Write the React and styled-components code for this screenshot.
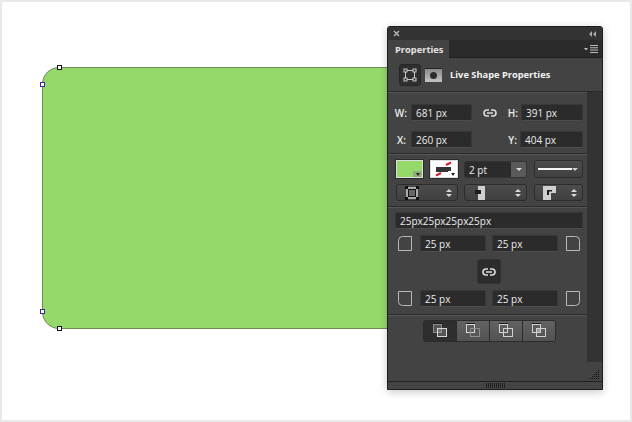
import React from 'react';
import styled, { createGlobalStyle } from 'styled-components';

const Global = createGlobalStyle`
  html, body { margin: 0; padding: 0; background: #fff; }
  * { box-sizing: border-box; }
`;

const Canvas = styled.div`
  position: relative;
  width: 632px;
  height: 422px;
  overflow: hidden;
  background: #fff;
  border: 2px solid #e9e9e9;
  font-family: "Open Sans", "DejaVu Sans", sans-serif;
`;

const Shape = styled.div`
  position: absolute;
  left: 40px;
  top: 65px;
  width: 400px;
  height: 262px;
  background: #95d96b;
  border: 1px solid #6c8a58;
  border-radius: 17px 0 0 17px;
`;

const Handle = styled.span`
  position: absolute;
  left: ${p => p.$x}px;
  top: ${p => p.$y}px;
  width: 5px;
  height: 5px;
  background: #fff;
  border: 1px solid ${p => p.$purple ? '#42249a' : '#14141f'};
`;

const Panel = styled.div`
  position: absolute;
  left: 385px;
  top: 24px;
  width: 216px;
  height: 364px;
  display: flex;
  flex-direction: column;
  background: #434343;
  border: 1px solid #1f1f1f;
  border-radius: 3px 3px 0 0;
  box-shadow: 0 2px 8px rgba(0, 0, 0, 0.22);
  color: #e8e8e8;
  font-size: 10px;
`;

const TitleBar = styled.div`
  height: 13px;
  display: flex;
  align-items: center;
  justify-content: space-between;
  padding: 0 5px 0 5px;
  background: #333;
`;

const TabRow = styled.div`
  height: 18px;
  display: flex;
  align-items: stretch;
  justify-content: space-between;
  background: #2b2b2b;
  border-bottom: 1px solid #1f1f1f;
`;

const Tab = styled.div`
  width: 61px;
  height: 18px;
  display: flex;
  align-items: center;
  padding-left: 7px;
  background: #434343;
  font-weight: 700;
  font-size: 9.3px;
  color: #e4e4e4;
`;

const MenuButton = styled.div`
  display: flex;
  align-items: center;
  padding-right: 4px;
`;

const LiveRow = styled.div`
  height: 34px;
  display: flex;
  align-items: center;
  padding-left: 11px;
  border-bottom: 1px solid #2b2b2b;
  box-shadow: 0 1px 0 #555;
`;

const ModeButton = styled.div`
  width: 22px;
  height: 22px;
  display: flex;
  align-items: center;
  justify-content: center;
  background: #2f2f2f;
  border: 1px solid #262626;
  border-radius: 3px;
`;

const MaskThumb = styled.div`
  width: 17px;
  height: 14px;
  margin-left: 4px;
  display: flex;
  align-items: center;
  justify-content: center;
  background: linear-gradient(#8a8a8a, #c4c4c4);
  border-top: 1px solid #222;
  &::after {
    content: '';
    width: 7px;
    height: 7px;
    border-radius: 50%;
    background: #2c2c2c;
  }
`;

const LiveTitle = styled.div`
  margin-left: 8px;
  font-weight: 700;
  font-size: 9.3px;
  color: #f2f2f2;
`;

const Body = styled.div`
  flex: none;
  height: 270px;
  display: flex;
`;

const Content = styled.div`
  width: 199px;
  display: flex;
  flex-direction: column;
`;

const Scroll = styled.div`
  width: 15px;
  background: #333;
`;

const Section = styled.div`
  padding: ${p => p.$padding};
  border-bottom: 1px solid #2b2b2b;
  box-shadow: 0 1px 0 #555;
`;

const MetricGrid = styled.div`
  display: grid;
  grid-template-columns: 23px 61px 35px 14px 62px;
  grid-auto-rows: 17px;
  row-gap: 10px;
  align-items: center;
`;

const MetricLabel = styled.label`
  text-align: right;
  padding-right: ${p => p.$pad || 5}px;
  font-weight: 600;
  font-size: 10px;
  color: #ececec;
  white-space: nowrap;
`;

const Field = styled.div`
  height: 17px;
  display: flex;
  align-items: center;
  padding-left: 4px;
  margin-left: ${p => p.$shift || 0}px;
  background: #2b2b2b;
  border: 1px solid #383838;
  border-bottom-color: #4d4d4d;
  font-size: 10px;
  color: #ededed;
  white-space: nowrap;
`;

const LinkCell = styled.div`
  display: flex;
  justify-content: center;
`;

const StrokeGrid = styled.div`
  display: grid;
  grid-template-columns: 62px 63px 50px;
  column-gap: 6px;
  row-gap: 6px;
  margin-left: 8px;
`;

const SwatchPair = styled.div`
  display: flex;
  gap: 7px;
`;

const Swatch = styled.div`
  position: relative;
  width: 28px;
  height: 18px;
  background: ${p => p.$color};
  border: 1px solid #ddd;
  box-shadow: 0 0 0 1px #2c2c2c;
  &::after {
    content: '';
    position: absolute;
    right: 0;
    bottom: 0;
    width: 9px;
    height: 6px;
    background: ${p => p.$tab};
  }
  &::before {
    content: '';
    position: absolute;
    z-index: 1;
    right: 2px;
    bottom: 1px;
    border: 2.5px solid transparent;
    border-top: 3px solid #222;
    border-bottom-width: 0;
  }
`;

const StrokeIcon = styled.svg`
  display: block;
`;

const WidthSelect = styled.div`
  height: 17px;
  margin-top: 1px;
  display: flex;
  border: 1px solid #333;
  border-radius: 2px;
  overflow: hidden;
`;

const WidthValue = styled.div`
  flex: 1;
  display: flex;
  align-items: center;
  padding-left: 4px;
  background: #2b2b2b;
  font-size: 10px;
  color: #ededed;
`;

const WidthArrow = styled.div`
  width: 15px;
  display: flex;
  align-items: center;
  justify-content: center;
  background: #5a5a5a;
  &::after {
    content: '';
    border: 3px solid transparent;
    border-top: 3px solid #ddd;
    border-bottom-width: 0;
  }
`;

const Dropdown = styled.div`
  height: ${p => p.$height || 17}px;
  margin-left: ${p => p.$shift || 0}px;
  display: flex;
  align-items: center;
  justify-content: space-between;
  padding: 0 4px 0 ${p => p.$left || 8}px;
  background: linear-gradient(#4c4c4c, #404040);
  border: 1px solid #2c2c2c;
  border-radius: 3px;
`;

const LineSample = styled.div`
  width: 35px;
  height: 2px;
  background: #f6f6f6;
`;

const SmallArrow = styled.span`
  border: 3px solid transparent;
  border-top: 3px solid #ccc;
  border-bottom-width: 0;
`;

const Updown = styled.span`
  display: flex;
  flex-direction: column;
  gap: 2px;
  margin-right: 1px;
  &::before, &::after {
    content: '';
    border: 3px solid transparent;
  }
  &::before {
    border-bottom: 3px solid #d8d8d8;
    border-top-width: 0;
  }
  &::after {
    border-top: 3px solid #d8d8d8;
    border-bottom-width: 0;
  }
`;

const CornerRow = styled.div`
  display: grid;
  grid-template-columns: 16px 66px 66px 16px;
  column-gap: 6px;
  align-items: center;
  height: 17px;
  margin: ${p => p.$top || 0}px 0 0 3px;
  & > svg:last-child { justify-self: end; }
`;

const LinkRow = styled.div`
  display: flex;
  justify-content: center;
  margin: 7px 0 6px;
`;

const LinkButton = styled.div`
  width: 24px;
  height: 25px;
  display: flex;
  align-items: center;
  justify-content: center;
  background: #2c2c2c;
  border: 1px solid #333;
  border-radius: 3px;
`;

const Combine = styled.div`
  display: flex;
  width: 133px;
  height: 22px;
  margin: 5px 0 0 35px;
  border: 1px solid #2b2b2b;
  border-radius: 3px;
  overflow: hidden;
`;

const CombineButton = styled.div`
  flex: 1;
  display: flex;
  align-items: center;
  justify-content: center;
  padding-bottom: 2px;
  background: ${p => p.$active ? '#2e2e2e' : 'linear-gradient(#626262, #525252)'};
  & + & { border-left: 1px solid #2b2b2b; }
`;

const ResizeRow = styled.div`
  flex: none;
  height: 19px;
  display: flex;
  justify-content: flex-end;
  align-items: flex-end;
  padding: 0 2px 1px 0;
`;

const Footer = styled.div`
  flex: 1;
  display: flex;
  align-items: center;
  justify-content: center;
  border-top: 1px solid #222;
  background: #444;
`;

const LinkIcon = () => (
  <svg width="14" height="10" viewBox="0 0 14 10" fill="none" stroke="#dcdcdc" strokeWidth="1.6">
    <path d="M6 2H4a3 3 0 0 0 0 6h2M8 2h2a3 3 0 0 1 0 6H8M4 5h6" />
  </svg>
);

const Corner = ({ d }) => (
  <svg width="14" height="15" viewBox="0 0 14 15" fill="none" stroke="#b8b8b8">
    <path d={d} />
  </svg>
);

const Pair = ({ back = '#d0d0d0', front = '#d0d0d0', fill = 'none', overlap = 'none' }) => (
  <svg width="14" height="14" viewBox="0 0 14 14">
    <path d="M0 0h9v1H0z" fill="#1c1c1c" />
    <rect x="0.5" y="1.500" width="8" height="8" fill={fill} stroke={back} />
    <rect x="4.500" y="5.500" width="9" height="8" fill={fill} stroke={front} />
    <rect x="5" y="6" width="3" height="3" fill={overlap} />
  </svg>
);

const Dots = () => {
  const dots = [];
  for (let c = 0; c < 5; c++) {
    for (let r = 4 - c; r < 5; r++) {
      dots.push(<rect key={`${c}-${r}`} x={c * 2} y={r * 2} width="1" height="1" fill="#111" />);
    }
  }
  return <svg width="10" height="10" viewBox="0 0 10 10">{dots}</svg>;
};

const Grip = () => (
  <svg width="19" height="5" viewBox="0 0 19 5">
    {Array.from({ length: 10 }, (_, i) => (
      <rect key={i} x={i * 2} y="0" width="1" height="5" fill="#222" />
    ))}
  </svg>
);

export default function App() {
  return (
    <Canvas>
      <Global />
      <Shape>
        <Handle $x={14} $y={-3} />
        <Handle $x={-3} $y={14} $purple />
        <Handle $x={-3} $y={241} $purple />
        <Handle $x={14} $y={258} />
      </Shape>
      <Panel>
        <TitleBar>
          <svg width="7" height="7" viewBox="0 0 7 7" stroke="#bbb" strokeWidth="1.3">
            <path d="M1 1l5 5M6 1L1 6" />
          </svg>
          <svg width="8" height="6" viewBox="0 0 8 6" fill="#aaa">
            <path d="M3 0v6L0 3zM7 0v6L4 3z" />
          </svg>
        </TitleBar>
        <TabRow>
          <Tab>Properties</Tab>
          <MenuButton>
            <svg width="14" height="8" viewBox="0 0 14 8" fill="#bbb">
              <path d="M0 3h4L2 5.500zM6 0h8v1H6zM6 2.300h8v1H6zM6 4.600h8v1H6zM6 7h8v1H6z" />
            </svg>
          </MenuButton>
        </TabRow>
        <LiveRow>
          <ModeButton>
            <svg width="14" height="14" viewBox="0 0 14 14" fill="none" stroke="#c8c8c8">
              <rect x="2.500" y="2.500" width="9" height="9" />
              <rect x="1" y="1" width="3" height="3" fill="#2f2f2f" />
              <rect x="10" y="1" width="3" height="3" fill="#2f2f2f" />
              <rect x="1" y="10" width="3" height="3" fill="#2f2f2f" />
              <rect x="10" y="10" width="3" height="3" fill="#2f2f2f" />
            </svg>
          </ModeButton>
          <MaskThumb />
          <LiveTitle>Live Shape Properties</LiveTitle>
        </LiveRow>
        <Body>
          <Content>
            <Section $padding="12px 0 5px">
              <MetricGrid>
                <MetricLabel $pad={4}>W:</MetricLabel>
                <Field>681 px</Field>
                <LinkCell><LinkIcon /></LinkCell>
                <MetricLabel $pad={3}>H:</MetricLabel>
                <Field>391 px</Field>
                <MetricLabel>X:</MetricLabel>
                <Field>260 px</Field>
                <span />
                <MetricLabel $pad={4}>Y:</MetricLabel>
                <Field $shift={-1}>404 px</Field>
              </MetricGrid>
            </Section>
            <Section $padding="6px 0 5px">
              <StrokeGrid>
                <SwatchPair>
                  <Swatch $color="#95d96b" $tab="#8fae7c" />
                  <Swatch $color="#fff" $tab="#fff">
                    <StrokeIcon width="26" height="16" viewBox="0 0 26 16">
                      <rect x="5" y="6" width="15" height="5" fill="#333" />
                      <path d="M15 4L20 1.500M5 14.500L10 12" stroke="#d8202a" strokeWidth="2" />
                    </StrokeIcon>
                  </Swatch>
                </SwatchPair>
                <WidthSelect>
                  <WidthValue>2 pt</WidthValue>
                  <WidthArrow />
                </WidthSelect>
                <Dropdown $left={3} $shift={1} $height={18}>
                  <LineSample />
                  <SmallArrow />
                </Dropdown>
                <Dropdown>
                  <svg width="14" height="14" viewBox="0 0 14 14">
                    <rect x="1" y="1" width="12" height="12" fill="#aaa" />
                    <rect x="3.500" y="3.500" width="7" height="7" fill="#666" stroke="#111" />
                    <rect x="0" y="0" width="3" height="3" fill="#111" />
                    <rect x="11" y="0" width="3" height="3" fill="#111" />
                    <rect x="0" y="11" width="3" height="3" fill="#111" />
                    <rect x="11" y="11" width="3" height="3" fill="#111" />
                  </svg>
                  <Updown />
                </Dropdown>
                <Dropdown $left={10}>
                  <svg width="10" height="14" viewBox="0 0 10 14">
                    <rect x="3" y="0" width="7" height="14" fill="#cfcfcf" />
                    <rect x="0" y="4" width="6" height="4" fill="#1c1c1c" />
                  </svg>
                  <Updown />
                </Dropdown>
                <Dropdown $shift={1}>
                  <svg width="13" height="14" viewBox="0 0 13 14">
                    <path d="M0 0h13v7H8v7H0z" fill="#cfcfcf" />
                    <path d="M4 9V4h5v1.500H6V9z" fill="#1c1c1c" />
                  </svg>
                  <Updown />
                </Dropdown>
              </StrokeGrid>
            </Section>
            <Section $padding="5px 4px 7px 7px">
              <Field>25px25px25px25px</Field>
              <CornerRow $top={6}>
                <Corner d="M0.500 14.500V4.500Q0.500 0.500 4.500 0.500H13.500V14.500Z" />
                <Field>25 px</Field>
                <Field>25 px</Field>
                <Corner d="M0.500 0.500H9.500Q13.500 0.500 13.500 4.500V14.500H0.500Z" />
              </CornerRow>
              <LinkRow>
                <LinkButton><LinkIcon /></LinkButton>
              </LinkRow>
              <CornerRow>
                <Corner d="M0.500 0.500H13.500V14.500H4.500Q0.500 14.500 0.500 10.500Z" />
                <Field>25 px</Field>
                <Field>25 px</Field>
                <Corner d="M0.500 0.500H13.500V10.500Q13.500 14.500 9.500 14.500H0.500Z" />
              </CornerRow>
            </Section>
            <Combine>
              <CombineButton $active><Pair back="#8d8d8d" front="#d8d8d8" fill="rgba(200,200,200,.25)" /></CombineButton>
              <CombineButton><Pair back="#d8d8d8" front="#8d8d8d" /></CombineButton>
              <CombineButton><Pair /></CombineButton>
              <CombineButton><Pair overlap="rgba(220,220,220,.5)" /></CombineButton>
            </Combine>
          </Content>
          <Scroll />
        </Body>
        <ResizeRow><Dots /></ResizeRow>
        <Footer><Grip /></Footer>
      </Panel>
    </Canvas>
  );
}
